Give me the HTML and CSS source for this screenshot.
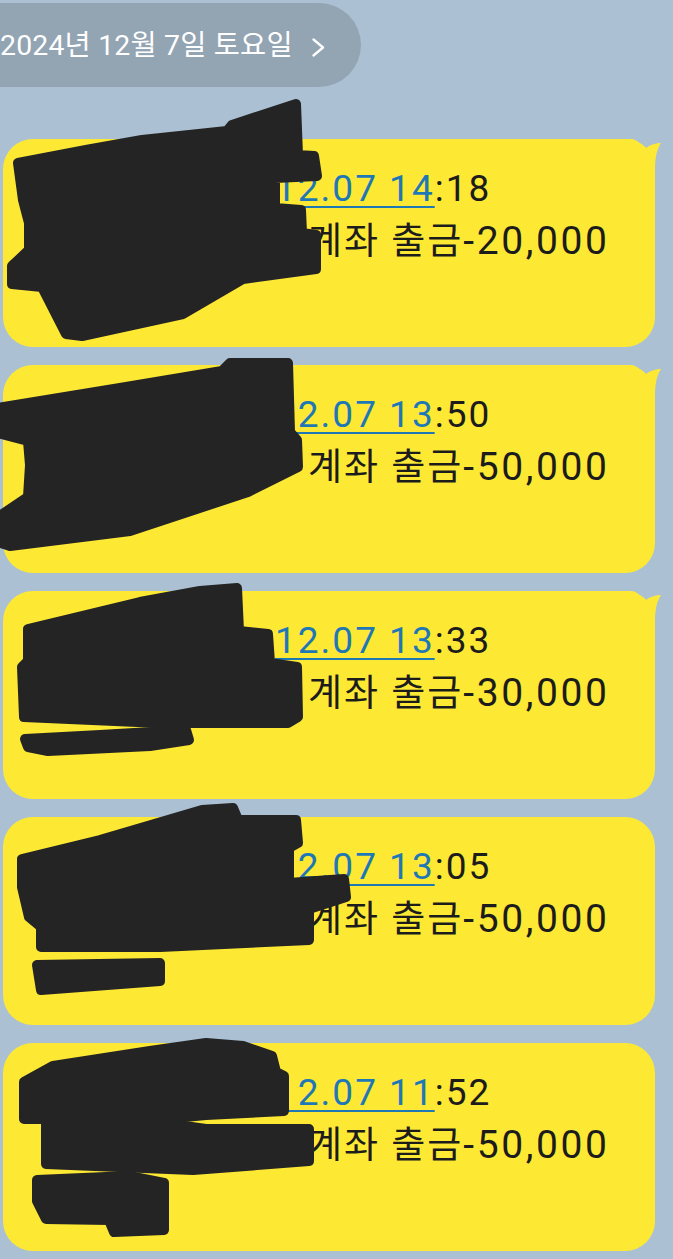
FILE: index.html
```html
<!DOCTYPE html>
<html lang="ko">
<head>
<meta charset="utf-8">
<title>채팅</title>
<link rel="stylesheet" href="styles.css">
</head>
<body>
<div class="screen">
  <div class="date-row">
    <div class="date-pill">
      <span class="date-text">2024년 12월 7일 토요일</span>
      <svg class="chev" viewBox="0 0 13 19" width="13" height="19"><polyline points="1.5,1.5 11,9.5 1.5,17.5" fill="none" stroke="#ffffff" stroke-width="2.3" stroke-linecap="round" stroke-linejoin="round"/></svg>
    </div>
  </div>

  <div class="chat">
    <div class="bubble">
      <p class="l1"><span class="link">12.07 14</span>:18</p>
      <p class="l2">계좌 출금<span class="amt">-20,000</span></p>
      <svg class="tail" viewBox="0 0 40 40" width="40" height="40"><path d="M0,0 H8 C14,0 18,5 21,11 C26,6 32,4 38,4 C34,10 32,18 32,30 V40 H0 Z"/></svg>
      <svg class="scribble" viewBox="0 0 673 208" width="673" height="208"><path d="M18,24 L86,11 L142,1 L227,-8 L232,-14 L296,-35 L298,16 L314,17 L317,37 L275,39 L275,69 L301,71 L302,94 L316,96 L316,130 L243,140 L183,175 L82,197 L66,195 L42,148 L12,145 L12,127 L29,111 L29,84 L23,61 Z"/></svg>
    </div>

    <div class="bubble">
      <p class="l1"><span class="link">12.07 13</span>:50</p>
      <p class="l2">계좌 출금<span class="amt">-50,000</span></p>
      <svg class="tail" viewBox="0 0 40 40" width="40" height="40"><path d="M0,0 H8 C14,0 18,5 21,11 C26,6 32,4 38,4 C34,10 32,18 32,30 V40 H0 Z"/></svg>
      <svg class="scribble" viewBox="0 0 673 208" width="673" height="208"><path d="M-2,43 L120,23 L222,6 L230,-2 L288,-2 L290,67 L297,75 L298,102 L248,127 L130,166 L10,181 L-2,177 L-2,152 L28,132 L30,100 L28,76 L-2,68 Z"/></svg>
    </div>

    <div class="bubble">
      <p class="l1"><span class="link">12.07 13</span>:33</p>
      <p class="l2">계좌 출금<span class="amt">-30,000</span></p>
      <svg class="tail" viewBox="0 0 40 40" width="40" height="40"><path d="M0,0 H8 C14,0 18,5 21,11 C26,6 32,4 38,4 C34,10 32,18 32,30 V40 H0 Z"/></svg>
      <svg class="scribble" viewBox="0 0 673 208" width="673" height="208"><path d="M28,38 L140,11 L200,0 L237,-3 L239,40 L268,43 L270,72 L297,76 L298,126 L288,132 L160,132 L24,126 L22,76 L28,70 Z"/><path d="M25,148 L100,144 L186,139 L189,149 L150,155 L48,160 L28,156 Z"/></svg>
    </div>

    <div class="bubble">
      <p class="l1"><span class="link">12.07 13</span>:05</p>
      <p class="l2">계좌 출금<span class="amt">-50,000</span></p>
      <svg class="scribble" viewBox="0 0 673 208" width="673" height="208"><path d="M22,42 L100,23 L202,-7 L233,-9 L238,3 L296,3 L298,26 L289,31 L289,66 L344,62 L346,80 L309,92 L309,123 L160,130 L41,130 L41,110 L29,100 L22,70 Z"/><path d="M37,148 L160,146 L160,164 L41,173 Z"/></svg>
    </div>

    <div class="bubble">
      <p class="l1"><span class="link">12.07 11</span>:52</p>
      <p class="l2">계좌 출금<span class="amt">-50,000</span></p>
      <svg class="scribble" viewBox="0 0 673 208" width="673" height="208"><path d="M24,39 L53,23 L150,8 L206,0 L243,3 L272,13 L276,29 L284,33 L284,68 L206,72 L163,76 L24,76 Z"/><path d="M46,78 L163,80 L206,86 L309,86 L309,118 L193,127 L46,121 Z"/><path d="M37,137 L129,133 L164,140 L164,187 L114,189 L109,177 L46,176 L37,158 Z"/></svg>
    </div>
  </div>
</div>
</body>
</html>
```

FILE: styles.css
```css
html, body {
  margin: 0;
  padding: 0;
  background: #abc0d3;
}

.screen {
  width: 673px;
  height: 1259px;
  overflow: hidden;
  background: #abc0d3;
  padding-top: 3px;
  box-sizing: border-box;
  font-family: Roboto, "Noto Sans CJK KR", sans-serif;
}

.date-row {
  display: flex;
}

.date-pill {
  display: flex;
  align-items: center;
  height: 84px;
  box-sizing: border-box;
  margin-left: -40px;
  padding: 3px 36px 0 40px;
  border-radius: 42px;
  background: #93a4b3;
  color: #ffffff;
}

.date-text {
  font-size: 28.4px;
  line-height: 1;
  letter-spacing: 0.2px;
}

.chev {
  display: block;
  margin-left: 19px;
  margin-top: 1px;
}

.chat {
  display: flex;
  flex-direction: column;
  gap: 18px;
  margin-top: 52px;
}

.bubble {
  position: relative;
  margin-left: 3px;
  width: 652px;
  height: 208px;
  box-sizing: border-box;
  padding-top: 23px;
  background: #fde934;
  border-radius: 30px;
  color: #1c1c1c;
  font-size: 37px;
  line-height: 53px;
  letter-spacing: 2px;
}

.bubble p {
  margin: 0;
  white-space: nowrap;
}

.l1 {
  padding-left: 272px;
}

.l2 {
  padding-left: 305px;
}

.amt {
  font-size: 39px;
  letter-spacing: 2.6px;
}

.link {
  color: #1f78b6;
  text-decoration: underline;
  text-decoration-thickness: 2px;
  text-underline-offset: 5px;
}

.tail {
  position: absolute;
  top: 0;
  right: -8px;
  fill: #fde934;
}

.scribble {
  position: absolute;
  left: -3px;
  top: 0;
  overflow: visible;
  pointer-events: none;
}

.scribble path {
  fill: #242424;
  stroke: #242424;
  stroke-width: 10;
  stroke-linejoin: round;
}
```
